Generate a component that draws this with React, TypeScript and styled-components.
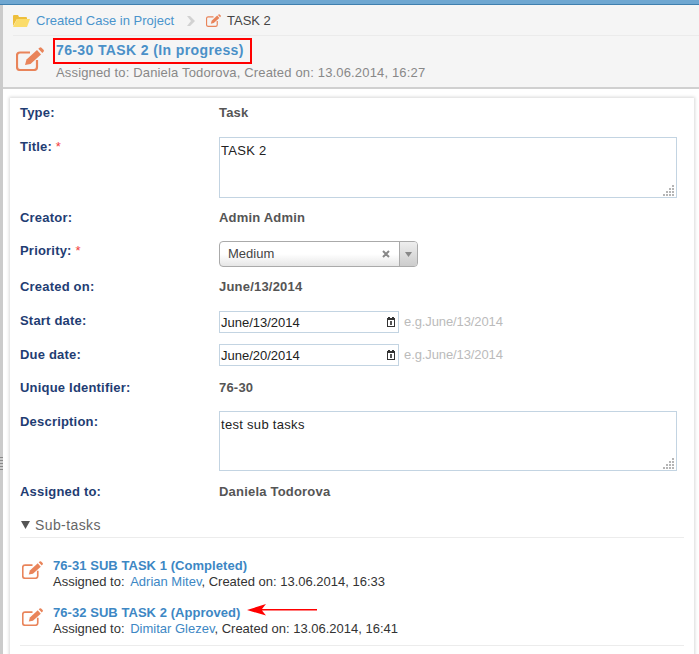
import styled, { createGlobalStyle } from 'styled-components';

const GlobalStyle = createGlobalStyle`
  html, body {
    margin: 0;
    padding: 0;
    background: #fff;
    overflow: hidden;
    font-family: 'Liberation Sans', Arial, sans-serif;
  }
`;

const Page = styled.div`
  width: 699px;
  height: 654px;
  overflow: hidden;
  display: flex;
  flex-direction: column;
`;

const TopBar = styled.div`
  height: 4px;
  flex-shrink: 0;
  background: #6fa7d1;
  border-bottom: 1px solid #3f7fae;
`;

const Body = styled.div`
  flex: 1;
  display: flex;
  min-height: 0;
`;

const Rail = styled.div`
  width: 3px;
  flex-shrink: 0;
  background: #cbcbcb;
  position: relative;
`;

const Grip = styled.div`
  position: absolute;
  top: 452px;
  left: 0;
  width: 3px;
  height: 15px;
  background: repeating-linear-gradient(to bottom, #8a8a8a 0 1px, transparent 1px 3px);
`;

const Main = styled.div`
  flex: 1;
  min-width: 0;
`;

const Header = styled.header`
  height: 84px;
  box-sizing: border-box;
  background: #f5f5f5;
  border-bottom: 2px solid #d0d0d0;
  padding: 0 0 0 10px;
`;

const Breadcrumb = styled.nav`
  height: 31px;
  box-sizing: border-box;
  display: flex;
  align-items: center;
  border-bottom: 1px solid #ebebeb;
  font-size: 13px;
  padding-top: 1px;
`;

const Crumb = styled.a`
  color: #4a94cc;
  margin-left: 6px;
`;

const CrumbCurrent = styled.span`
  color: #444;
  margin-left: 6px;
`;

const CrumbSep = styled.svg`
  margin: 0 11px 0 13px;
`;

const HeadRow = styled.div`
  display: flex;
  padding: 2px 0 0 3px;
`;

const HeadIcon = styled.div`
  width: 37px;
  flex-shrink: 0;
  padding-top: 9px;
`;

const HeadTitle = styled.h1`
  display: inline-block;
  margin: 0;
  border: 2px solid #f00;
  padding: 2px 6px 3px 1px;
  font-size: 14px;
  line-height: 17px;
  font-weight: bold;
  color: #4a90c8;
  letter-spacing: 0.38px;
`;

const HeadSub = styled.div`
  margin: 1px 0 0 3px;
  font-size: 13px;
  line-height: 15px;
  color: #888;
  letter-spacing: 0.16px;
`;

const Card = styled.section`
  margin: 9px 5px 0 7px;
  padding: 5px 10px 0 10px;
  background: #fff;
  box-shadow: 0 0 3px 1px #d8d8d8;
  min-height: 560px;
`;

const Row = styled.div<{ $h: number }>`
  display: grid;
  grid-template-columns: 199px 1fr;
  height: ${p => p.$h}px;
  font-size: 13px;
`;

const Label = styled.div<{ $top: number }>`
  padding-top: ${p => p.$top}px;
  font-weight: bold;
  color: #1f3d73;
  line-height: 14px;
  letter-spacing: 0.2px;
`;

const Star = styled.span`
  color: #f23c3c;
  font-weight: normal;
`;

const Value = styled.div<{ $top: number }>`
  padding-top: ${p => p.$top}px;
  font-weight: bold;
  color: #555;
  line-height: 14px;
  letter-spacing: 0.2px;
`;

const FieldCell = styled.div`
  display: flex;
  align-items: flex-start;
`;

const AreaBox = styled.div<{ $h: number }>`
  position: relative;
  width: 458px;
  height: ${p => p.$h}px;
  box-sizing: border-box;
  border: 1px solid #c3d4e2;
  padding: 6px 1px;
  font-size: 13px;
  line-height: 14px;
  color: #222;
  letter-spacing: 0.3px;
`;

const Resize = styled.svg`
  position: absolute;
  right: 1px;
  bottom: 1px;
`;

const SelectBox = styled.div`
  width: 199px;
  height: 26px;
  box-sizing: border-box;
  border: 1px solid #aaa;
  border-radius: 4px;
  background: linear-gradient(to bottom, #ffffff 0%, #ffffff 50%, #e6e6e6 100%);
  display: flex;
  align-items: center;
  font-size: 13px;
  color: #444;
`;

const SelectText = styled.span`
  flex: 1;
  padding: 0 0 2px 8px;
`;

const SelectClear = styled.svg`
  margin-right: 9px;
`;

const SelectArrow = styled.div`
  width: 18px;
  height: 100%;
  box-sizing: border-box;
  border-left: 1px solid #aaa;
  border-radius: 0 3px 3px 0;
  background: linear-gradient(to bottom, #eeeeee, #cccccc);
  display: flex;
  align-items: center;
  justify-content: center;
`;

const DateBox = styled.div`
  width: 180px;
  height: 22px;
  box-sizing: border-box;
  border: 1px solid #c3d4e2;
  padding: 0 3px 0 1px;
  display: flex;
  align-items: center;
  justify-content: space-between;
  font-size: 13px;
  color: #222;
`;

const Hint = styled.span`
  margin-left: 5px;
  font-size: 13px;
  line-height: 22px;
  color: #bbb;
  letter-spacing: -0.1px;
`;

const SectionHead = styled.div`
  height: 24px;
  margin-top: 7px;
  display: flex;
  align-items: center;
  gap: 4px;
  border-bottom: 1px solid #ececec;
  font-size: 14px;
  color: #666;
  letter-spacing: 0.4px;
  padding-left: 1px;
`;

const SubList = styled.div`
  margin-top: 20px;
  padding-bottom: 8px;
  border-bottom: 1px solid #ececec;
  display: flex;
  flex-direction: column;
  gap: 15px;
`;

const SubItem = styled.div`
  position: relative;
  display: flex;
`;

const SubIcon = styled.div`
  width: 33px;
  padding: 3px 0 0 2px;
  box-sizing: border-box;
`;

const SubTitle = styled.a`
  display: block;
  font-size: 13px;
  line-height: 15px;
  font-weight: bold;
  color: #3d87c4;
  letter-spacing: 0.05px;
`;

const SubMeta = styled.div`
  margin-top: 1px;
  font-size: 13px;
  line-height: 16px;
  color: #333;
`;

const Person = styled.a`
  margin-left: 2px;
  color: #3d87c4;
`;

const RedArrow = styled.svg`
  position: absolute;
  left: 227px;
  top: -2px;
`;

function EditIcon({ size }: { size: number }) {
  return (
    <svg width={size} height={(size * 6) / 7} viewBox='0 0 28 24' fill='none'>
      <path
        d='M14 5.5H4a3 3 0 0 0-3 3V20a3 3 0 0 0 3 3h14a3 3 0 0 0 3-3v-7'
        stroke='#e9845a'
        strokeWidth='2.2'
      />
      <path d='M9 18 10.5 12.5 21 3 25 7.5 14.5 17z' fill='#e9845a' />
      <path
        d='M22.3 1.8 23.5.8a1.5 1.5 0 0 1 2 0l2 2a1.5 1.5 0 0 1 0 2l-1.2 1.2z'
        fill='#e9845a'
      />
    </svg>
  );
}

function ResizeDots() {
  return (
    <Resize width='12' height='12' viewBox='0 0 12 12' fill='#b5b5b5'>
      {[
        [9, 1],
        [6, 4],
        [9, 4],
        [3, 7],
        [6, 7],
        [9, 7],
        [0, 10],
        [3, 10],
        [6, 10],
        [9, 10],
      ].map(([x, y]) => (
        <rect key={`${x}-${y}`} x={x} y={y} width='2' height='2' />
      ))}
    </Resize>
  );
}

function CalendarIcon() {
  return (
    <svg width='8' height='10' viewBox='0 0 8 10'>
      <path d='M1 0h2v1h2V0h2v1h1v9H0V1h1z' fill='#333' />
      <rect x='1' y='3' width='6' height='6' fill='#fff' />
      <rect x='3' y='4' width='2' height='4' fill='#555' />
    </svg>
  );
}

export default function App() {
  return (
    <Page>
      <GlobalStyle />
      <TopBar />
      <Body>
        <Rail>
          <Grip />
        </Rail>
        <Main>
          <Header>
            <Breadcrumb>
              <svg width='17' height='13' viewBox='0 0 17 13'>
                <path d='M0 2a1 1 0 0 1 1-1h4l1 2h7a1 1 0 0 1 1 1v1H4L0 12z' fill='#eebf3c' />
                <path d='M4 5h13l-3 8H0z' fill='#fbdc6a' />
              </svg>
              <Crumb>Created Case in Project</Crumb>
              <CrumbSep width='8' height='10' viewBox='0 0 8 10'>
                <path d='M0 0h3l5 5-5 5H0l4-5z' fill='#d2d2d2' />
              </CrumbSep>
              <EditIcon size={15} />
              <CrumbCurrent>TASK 2</CrumbCurrent>
            </Breadcrumb>
            <HeadRow>
              <HeadIcon>
                <EditIcon size={28} />
              </HeadIcon>
              <div>
                <HeadTitle>76-30 TASK 2 (In progress)</HeadTitle>
                <HeadSub>Assigned to: Daniela Todorova, Created on: 13.06.2014, 16:27</HeadSub>
              </div>
            </HeadRow>
          </Header>
          <Card>
            <Row $h={34}>
              <Label $top={3}>Type:</Label>
              <Value $top={3}>Task</Value>
            </Row>
            <Row $h={71}>
              <Label $top={3}>
                Title: <Star>*</Star>
              </Label>
              <FieldCell>
                <AreaBox $h={61}>
                  TASK 2
                  <ResizeDots />
                </AreaBox>
              </FieldCell>
            </Row>
            <Row $h={33}>
              <Label $top={3}>Creator:</Label>
              <Value $top={3}>Admin Admin</Value>
            </Row>
            <Row $h={36}>
              <Label $top={3}>
                Priority: <Star>*</Star>
              </Label>
              <FieldCell>
                <SelectBox>
                  <SelectText>Medium</SelectText>
                  <SelectClear width='8' height='8' viewBox='0 0 8 8'>
                    <path d='M1 1l6 6M7 1L1 7' stroke='#888' strokeWidth='2' />
                  </SelectClear>
                  <SelectArrow>
                    <svg width='7' height='5' viewBox='0 0 7 5'>
                      <path d='M0 0h7L3.5 5z' fill='#888' />
                    </svg>
                  </SelectArrow>
                </SelectBox>
              </FieldCell>
            </Row>
            <Row $h={34}>
              <Label $top={3}>Created on:</Label>
              <Value $top={3}>June/13/2014</Value>
            </Row>
            <Row $h={33}>
              <Label $top={3}>Start date:</Label>
              <FieldCell>
                <DateBox>
                  June/13/2014
                  <CalendarIcon />
                </DateBox>
                <Hint>e.g.June/13/2014</Hint>
              </FieldCell>
            </Row>
            <Row $h={34}>
              <Label $top={4}>Due date:</Label>
              <FieldCell>
                <DateBox>
                  June/20/2014
                  <CalendarIcon />
                </DateBox>
                <Hint>e.g.June/13/2014</Hint>
              </FieldCell>
            </Row>
            <Row $h={33}>
              <Label $top={3}>Unique Identifier:</Label>
              <Value $top={3}>76-30</Value>
            </Row>
            <Row $h={70}>
              <Label $top={4}>Description:</Label>
              <FieldCell>
                <AreaBox $h={60}>
                  test sub tasks
                  <ResizeDots />
                </AreaBox>
              </FieldCell>
            </Row>
            <Row $h={25}>
              <Label $top={4}>Assigned to:</Label>
              <Value $top={4}>Daniela Todorova</Value>
            </Row>
            <SectionHead>
              <svg width='10' height='8' viewBox='0 0 10 8'>
                <path d='M0 0h9L4.5 8z' fill='#555' />
              </svg>
              Sub-tasks
            </SectionHead>
            <SubList>
              <SubItem>
                <SubIcon>
                  <EditIcon size={21} />
                </SubIcon>
                <div>
                  <SubTitle>76-31 SUB TASK 1 (Completed)</SubTitle>
                  <SubMeta>
                    Assigned to: <Person>Adrian Mitev</Person>, Created on: 13.06.2014, 16:33
                  </SubMeta>
                </div>
              </SubItem>
              <SubItem>
                <SubIcon>
                  <EditIcon size={21} />
                </SubIcon>
                <div>
                  <SubTitle>76-32 SUB TASK 2 (Approved)</SubTitle>
                  <SubMeta>
                    Assigned to: <Person>Dimitar Glezev</Person>, Created on: 13.06.2014, 16:41
                  </SubMeta>
                </div>
                <RedArrow width='70' height='14' viewBox='0 0 70 14'>
                  <path d='M0 7 19 1l-4 5h55v1.6H15l4 5z' fill='#f00' />
                </RedArrow>
              </SubItem>
            </SubList>
          </Card>
        </Main>
      </Body>
    </Page>
  );
}
